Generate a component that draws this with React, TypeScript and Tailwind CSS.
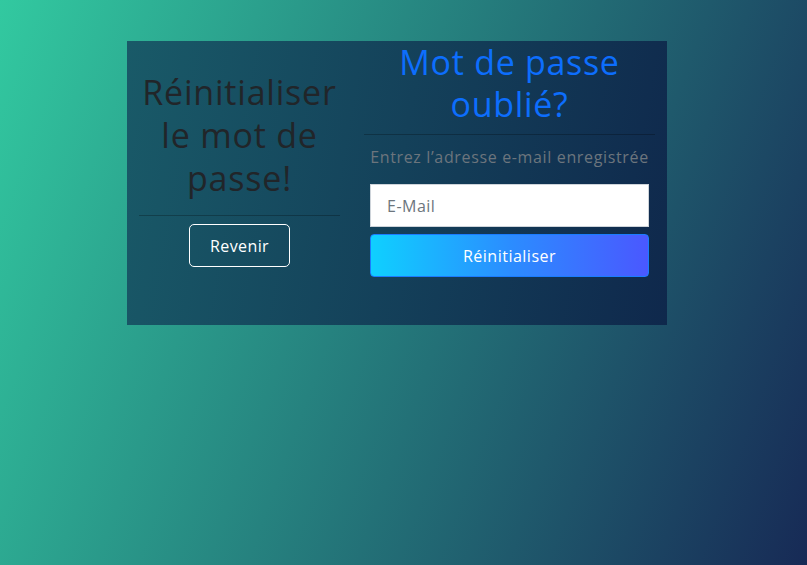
import React from "react";

export default function App() {
  return (
    <div
      className="min-h-screen w-full bg-[linear-gradient(110deg,#32c9a0_0%,#172a56_100%)] pt-[41px] pb-[240px]"
      style={{ fontFamily: '"Open Sans", "Noto Sans", sans-serif' }}
    >
      <div className="ml-[127px] flex h-[284px] w-[540px] bg-[linear-gradient(100deg,#195a68_0%,#0f284c_100%)]">
        <div className="flex w-[225px] flex-col items-center px-3 pt-[30px]">
          <h1 className="text-center text-[34px] font-normal leading-[43px] tracking-[0.8px] text-[#212529]">
            Réinitialiser le mot de passe!
          </h1>
          <hr className="mt-[15px] w-full border-t border-black/25" />
          <button className="mt-[8px] h-[43px] w-[101px] rounded-[5px] border border-white text-[16px] tracking-[0.4px] text-white">
            Revenir
          </button>
        </div>
        <div className="flex w-[315px] flex-col px-3">
          <h1 className="text-center text-[34px] font-normal leading-[42px] tracking-[0.7px] text-[#0d6efd]">
            Mot de passe oublié?
          </h1>
          <hr className="mt-[9px] w-full border-t border-black/25" />
          <p className="mt-[10px] text-center text-[16px] leading-[24px] tracking-[0.65px] text-[#6c757d]">
            Entrez l’adresse e-mail enregistrée
          </p>
          <div className="mt-[15px] px-[6px]">
            <input
              placeholder="E-Mail"
              className="h-[43px] w-full border border-[#ced4da] bg-white px-[16px] text-[16px] tracking-[0.5px] text-[#212529] placeholder:text-[#6c757d] outline-none"
            />
            <button className="mt-[7px] h-[43px] w-full rounded-[4px] border border-[#1a7cff] bg-[linear-gradient(90deg,#0fd0ff_0%,#2b8dff_50%,#4a58ff_100%)] text-[16px] tracking-[0.5px] text-white">
              Réinitialiser
            </button>
          </div>
        </div>
      </div>
    </div>
  );
}
